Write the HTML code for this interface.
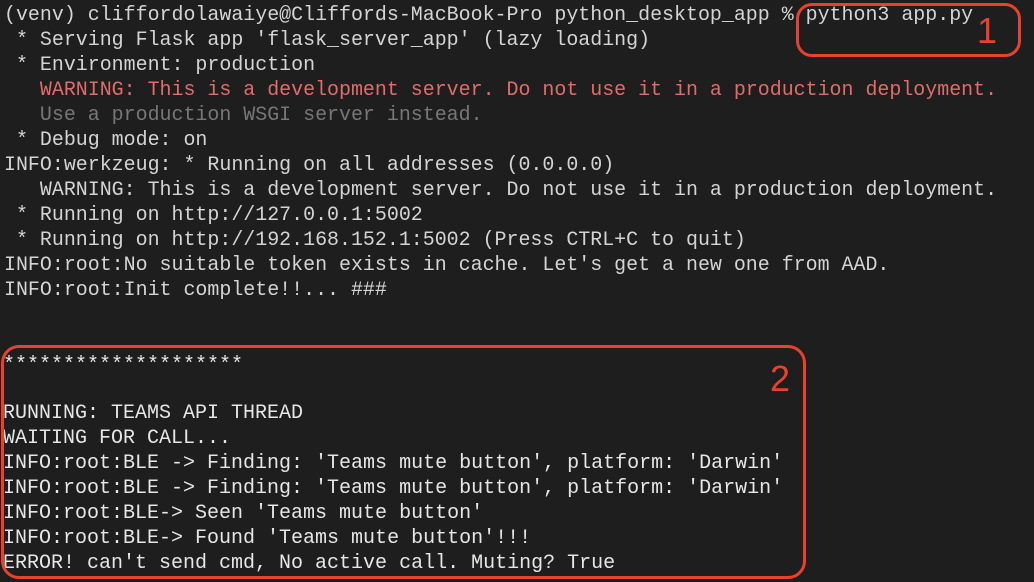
<!DOCTYPE html>
<html><head><style>
body{margin:0;width:1034px;height:582px;background:#1e1e1e;overflow:hidden;position:relative;font-family:"Liberation Mono",monospace;}
.l{position:absolute;left:4px;white-space:pre;font-size:19.95px;color:#d4d4d4;line-height:25px;}
.r{color:#e06c6c}.g{color:#777}
.b{font-size:20px;color:#e6e6e6;}
.box{position:absolute;border:3px solid #e8412c;box-sizing:border-box;}
.n{position:absolute;color:#e8412c;font-family:"Liberation Sans",sans-serif;font-size:36px;line-height:36px;}
</style></head><body>
<div class="l" style="top:2px">(venv) cliffordolawaiye@Cliffords-MacBook-Pro python_desktop_app % python3 app.py</div>
<div class="l" style="top:27px"> * Serving Flask app 'flask_server_app' (lazy loading)</div>
<div class="l" style="top:52px"> * Environment: production</div>
<div class="l r" style="top:77px">   WARNING: This is a development server. Do not use it in a production deployment.</div>
<div class="l g" style="top:102px">   Use a production WSGI server instead.</div>
<div class="l" style="top:127px"> * Debug mode: on</div>
<div class="l" style="top:152px">INFO:werkzeug: * Running on all addresses (0.0.0.0)</div>
<div class="l" style="top:177px">   WARNING: This is a development server. Do not use it in a production deployment.</div>
<div class="l" style="top:202px"> * Running on http://127.0.0.1:5002</div>
<div class="l" style="top:227px"> * Running on http://192.168.152.1:5002 (Press CTRL+C to quit)</div>
<div class="l" style="top:252px">INFO:root:No suitable token exists in cache. Let's get a new one from AAD.</div>
<div class="l" style="top:277px">INFO:root:Init complete!!... ###</div>
<div class="l b" style="top:353px;left:3px">********************</div>
<div class="l b" style="top:401px;left:3px">RUNNING: TEAMS API THREAD</div>
<div class="l b" style="top:426px;left:3px">WAITING FOR CALL...</div>
<div class="l b" style="top:451px;left:3px">INFO:root:BLE -&gt; Finding: 'Teams mute button', platform: 'Darwin'</div>
<div class="l b" style="top:476px;left:3px">INFO:root:BLE -&gt; Finding: 'Teams mute button', platform: 'Darwin'</div>
<div class="l b" style="top:501px;left:3px">INFO:root:BLE-&gt; Seen 'Teams mute button'</div>
<div class="l b" style="top:526px;left:3px">INFO:root:BLE-&gt; Found 'Teams mute button'!!!</div>
<div class="l b" style="top:551px;left:3px">ERROR! can't send cmd, No active call. Muting? True</div>
<div class="box" style="left:796px;top:3px;width:225px;height:54px;border-radius:16px"></div>
<div class="n" style="left:977px;top:13px">1</div>
<div class="box" style="left:1px;top:345px;width:805px;height:234px;border-radius:18px"></div>
<div class="n" style="left:770px;top:361px">2</div>
</body></html>
